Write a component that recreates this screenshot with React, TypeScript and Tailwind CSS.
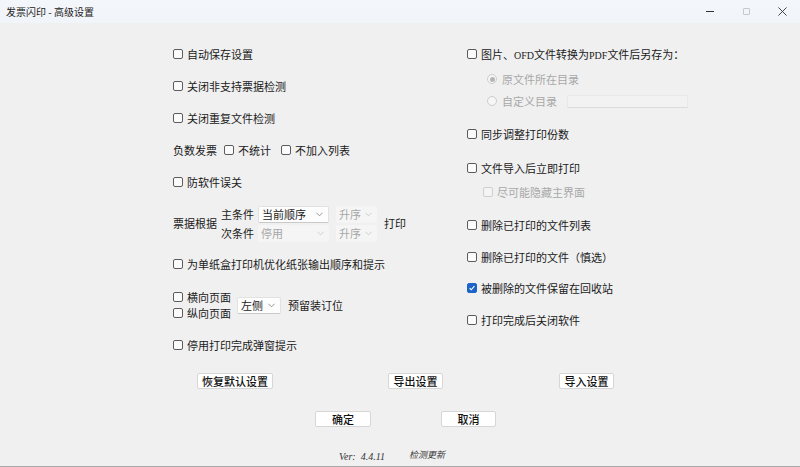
import React from 'react';

const Check = ({ checked = false, disabled = false }: { checked?: boolean; disabled?: boolean }) => (
  <span
    className={`inline-flex items-center justify-center w-[10px] h-[10px] rounded-[2px] border shrink-0 ${
      checked
        ? 'bg-[#1d64c8] border-[#1d64c8]'
        : disabled
        ? 'bg-[#f4f4f4] border-[#cfcfcf]'
        : 'bg-[#fbfbfb] border-[#5c5c5c]'
    }`}
  >
    {checked && (
      <svg viewBox="0 0 10 10" className="w-[8px] h-[8px]">
        <path d="M2 5.2 L4.1 7.2 L8 2.8" fill="none" stroke="white" strokeWidth="1.4" />
      </svg>
    )}
  </span>
);

const Radio = ({ selected = false }: { selected?: boolean }) => (
  <span className="inline-flex items-center justify-center w-[10px] h-[10px] rounded-full border border-[#cdcdcd] bg-[#f6f6f6] shrink-0">
    {selected && <span className="w-[5px] h-[5px] rounded-full bg-[#b4b4b4]" />}
  </span>
);

const Chevron = ({ light = false }: { light?: boolean }) => (
  <svg viewBox="0 0 8 5" className="w-[7px] h-[5px]">
    <path d="M0.5 0.5 L4 4 L7.5 0.5" fill="none" stroke={light ? '#c4c4c4' : '#7a7a7a'} strokeWidth="0.9" />
  </svg>
);

const Combo = ({ label, w, disabled = false }: { label: string; w: string; disabled?: boolean }) => (
  <div
    className={`flex items-center justify-between h-[17px] pl-[3px] pr-[5px] rounded-[2px] ${w} ${
      disabled ? 'bg-[#f5f5f5] text-[#a6a6a6]' : 'bg-[#fdfdfd] border border-[#e2e2e2] border-b-[#c9c9c9] text-[#1a1a1a]'
    }`}
  >
    <span className="leading-none">{label}</span>
    <Chevron light={disabled} />
  </div>
);

const Row = ({ children, className = '' }: { children: React.ReactNode; className?: string }) => (
  <div className={`flex items-center h-[20px] ${className}`}>{children}</div>
);

const CheckRow = ({ label, checked = false, className = '' }: { label: string; checked?: boolean; className?: string }) => (
  <Row className={className}>
    <Check checked={checked} />
    <span className="ml-[4px]">{label}</span>
  </Row>
);

const Btn = ({ label, w, className = '' }: { label: string; w: string; className?: string }) => (
  <div
    className={`flex items-center justify-center h-[16px] bg-white border border-[#d6d6d6] rounded-[2px] text-[11px] font-medium text-[#111] ${w} ${className}`}
  >
    {label}
  </div>
);

const App = () => {
  return (
    <div
      className="w-[800px] h-[467px] bg-[#f0f0f0] flex flex-col border-b border-[#a9a9a9] text-[11px] text-[#1a1a1a] overflow-hidden"
      style={{ fontFamily: '"Noto Sans CJK SC", "Noto Sans", sans-serif' }}
    >
      {/* Title bar */}
      <div className="h-[23px] bg-gradient-to-b from-[#f3f6fa] to-[#f1f4f8] flex items-center pl-[6px] shrink-0">
        <span className="text-[10px] text-[#222]">发票闪印 - 高级设置</span>
        <div className="ml-auto flex items-center h-full">
          <div className="w-[36px] flex justify-center">
            <span className="block w-[8px] h-[1px] bg-[#333]" />
          </div>
          <div className="w-[36px] flex justify-center">
            <span className="block w-[7px] h-[7px] border border-[#c8c8c8] rounded-[1px]" />
          </div>
          <div className="w-[36px] flex justify-center">
            <svg viewBox="0 0 10 10" className="w-[9px] h-[9px]">
              <path d="M0.5 0.5 L9.5 9.5 M9.5 0.5 L0.5 9.5" stroke="#333" strokeWidth="1" />
            </svg>
          </div>
        </div>
      </div>

      {/* Body */}
      <div className="flex pl-[173px]">
        {/* Left column */}
        <div className="w-[294px] flex flex-col">
          <CheckRow label="自动保存设置" className="mt-[21px]" />
          <CheckRow label="关闭非支持票据检测" className="mt-[12px]" />
          <CheckRow label="关闭重复文件检测" className="mt-[12px]" />
          <Row className="mt-[12px]">
            <span>负数发票</span>
            <span className="ml-[7px]"><Check /></span>
            <span className="ml-[4px]">不统计</span>
            <span className="ml-[10px]"><Check /></span>
            <span className="ml-[4px]">不加入列表</span>
          </Row>
          <CheckRow label="防软件误关" className="mt-[12px]" />
          <div className="mt-[13px] flex items-center h-[37px]">
            <span>票据根据</span>
            <div className="ml-[4px] flex flex-col gap-[2px]">
              <div className="flex items-center h-[17px]">
                <span className="w-[37px]">主条件</span>
                <Combo label="当前顺序" w="w-[71px]" />
                <div className="ml-[7px]">
                  <Combo label="升序" w="w-[41px]" disabled />
                </div>
              </div>
              <div className="flex items-center h-[17px]">
                <span className="w-[37px]">次条件</span>
                <Combo label="停用" w="w-[71px]" disabled />
                <div className="ml-[7px]">
                  <Combo label="升序" w="w-[41px]" disabled />
                </div>
              </div>
            </div>
            <span className="ml-[7px]">打印</span>
          </div>
          <CheckRow label="为单纸盒打印机优化纸张输出顺序和提示" className="mt-[12px]" />
          <div className="mt-[15px] flex items-center h-[32px]">
            <div className="flex flex-col">
              <div className="flex items-center h-[16px]">
                <Check />
                <span className="ml-[4px]">横向页面</span>
              </div>
              <div className="flex items-center h-[16px]">
                <Check />
                <span className="ml-[4px]">纵向页面</span>
              </div>
            </div>
            <div className="ml-[6px]">
              <Combo label="左侧" w="w-[44px]" />
            </div>
            <span className="ml-[7px]">预留装订位</span>
          </div>
          <CheckRow label="停用打印完成弹窗提示" className="mt-[14px]" />
        </div>

        {/* Right column */}
        <div className="flex flex-col">
          <Row className="mt-[21px]">
            <Check />
            <span className="ml-[4px]">
              图片、<span className="text-[10px]" style={{ fontFamily: '"Liberation Serif", serif' }}>OFD</span>文件转换为
              <span className="text-[10px]" style={{ fontFamily: '"Liberation Serif", serif' }}>PDF</span>文件后另存为：
            </span>
          </Row>
          <div className="mt-[6px] pl-[20px] flex items-center h-[18px] text-[#a8a8a8]">
            <Radio selected />
            <span className="ml-[5px]">原文件所在目录</span>
          </div>
          <div className="mt-[4px] pl-[20px] flex items-center h-[18px] text-[#a8a8a8]">
            <Radio />
            <span className="ml-[5px]">自定义目录</span>
            <div className="ml-[10px] w-[121px] h-[13px] border border-[#e8e8e8] border-b-[#dcdcdc] bg-[#f2f2f2]" />
          </div>
          <CheckRow label="同步调整打印份数" className="mt-[14px]" />
          <CheckRow label="文件导入后立即打印" className="mt-[14px]" />
          <Row className="mt-[4px] pl-[16px] text-[#a8a8a8]">
            <Check disabled />
            <span className="ml-[4px]">尽可能隐藏主界面</span>
          </Row>
          <CheckRow label="删除已打印的文件列表" className="mt-[13px]" />
          <CheckRow label="删除已打印的文件（慎选）" className="mt-[12px]" />
          <CheckRow label="被删除的文件保留在回收站" checked className="mt-[11px]" />
          <CheckRow label="打印完成后关闭软件" className="mt-[12px]" />
        </div>
      </div>

      {/* Buttons */}
      <div className="flex pl-[197px] mt-[18px]">
        <Btn label="恢复默认设置" w="w-[76px]" />
        <Btn label="导出设置" w="w-[55px]" className="ml-[115px]" />
        <Btn label="导入设置" w="w-[55px]" className="ml-[116px]" />
      </div>
      <div className="flex pl-[315px] mt-[22px]">
        <Btn label="确定" w="w-[56px]" />
        <Btn label="取消" w="w-[55px]" className="ml-[70px]" />
      </div>

      {/* Version */}
      <div
        className="flex items-center pl-[339px] mt-[23px] h-[12px] text-[10px] italic text-[#333]"
        style={{ fontFamily: '"Liberation Serif", "Noto Sans CJK SC", serif' }}
      >
        <span>Ver:&nbsp; 4.4.11</span>
        <span className="ml-[24px] text-[9px]">检测更新</span>
      </div>
    </div>
  );
};

export default App;
